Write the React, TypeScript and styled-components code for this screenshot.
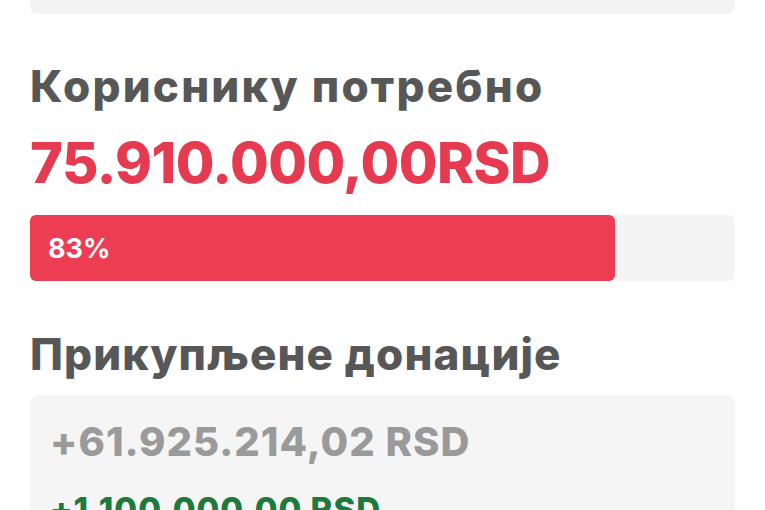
import React from "react";
import styled, { createGlobalStyle } from "styled-components";

const Global = createGlobalStyle`
  html, body { margin: 0; padding: 0; background: #ffffff; }
  body { width: 765px; height: 510px; overflow: hidden; font-family: "Inter", "Noto Sans", sans-serif; }
`;

const Page = styled.div`
  width: 765px;
  height: 510px;
  overflow: hidden;
  display: flex;
  flex-direction: column;
  padding: 0 30px 0 30px;
  box-sizing: border-box;
  & > * { flex-shrink: 0; }
`;

const TopCard = styled.div`
  height: 14px;
  background: #f3f3f3;
  border-radius: 0 0 8px 8px;
`;

const Heading = styled.h2<{ $mt: number; $ls: number }>`
  margin: ${(p) => p.$mt}px 0 0 0;
  font-size: 44px;
  line-height: 48px;
  font-weight: 800;
  color: #575757;
  letter-spacing: ${(p) => p.$ls}px;
  white-space: nowrap;
`;

const Amount = styled.div`
  margin-top: 23px;
  font-size: 56px;
  line-height: 60px;
  font-weight: 800;
  color: #e63a50;
  letter-spacing: -0.5px;
  white-space: nowrap;
`;

const Track = styled.div`
  margin-top: 22px;
  height: 66px;
  background: #f4f4f4;
  border-radius: 6px;
  display: flex;
`;

const Fill = styled.div`
  background: #ec3d53;
  border-radius: 6px;
  display: flex;
  align-items: center;
  padding-left: 18px;
  box-sizing: border-box;
  color: #ffffff;
  font-size: 27px;
  font-weight: 700;
`;

const DonationCard = styled.div`
  margin-top: 17px;
  flex: 1 0 auto;
  background: #f5f5f5;
  border-radius: 8px 8px 0 0;
  padding: 25px 20px 0 20px;
  display: flex;
  flex-direction: column;
  gap: 27px;
`;

const Donation = styled.div<{ $color: string; $size: number }>`
  font-size: ${(p) => p.$size}px;
  line-height: ${(p) => p.$size + 4}px;
  font-weight: 800;
  color: ${(p) => p.$color};
  letter-spacing: 1px;
  white-space: nowrap;
`;

export default function App() {
  const pct = 83;
  return (
    <>
      <Global />
      <Page>
        <TopCard />
        <Heading $mt={48} $ls={2.2}>Кориснику потребно</Heading>
        <Amount>75.910.000,00RSD</Amount>
        <Track>
          <Fill style={{ width: `${pct}%` }}>{pct}%</Fill>
        </Track>
        <Heading $mt={49} $ls={1.1}>Прикупљене донације</Heading>
        <DonationCard>
          <Donation $color="#9a9a9a" $size={40}>+61.925.214,02 RSD</Donation>
          <Donation $color="#1d7a3c" $size={33}>+1.100.000,00 RSD</Donation>
        </DonationCard>
      </Page>
    </>
  );
}
